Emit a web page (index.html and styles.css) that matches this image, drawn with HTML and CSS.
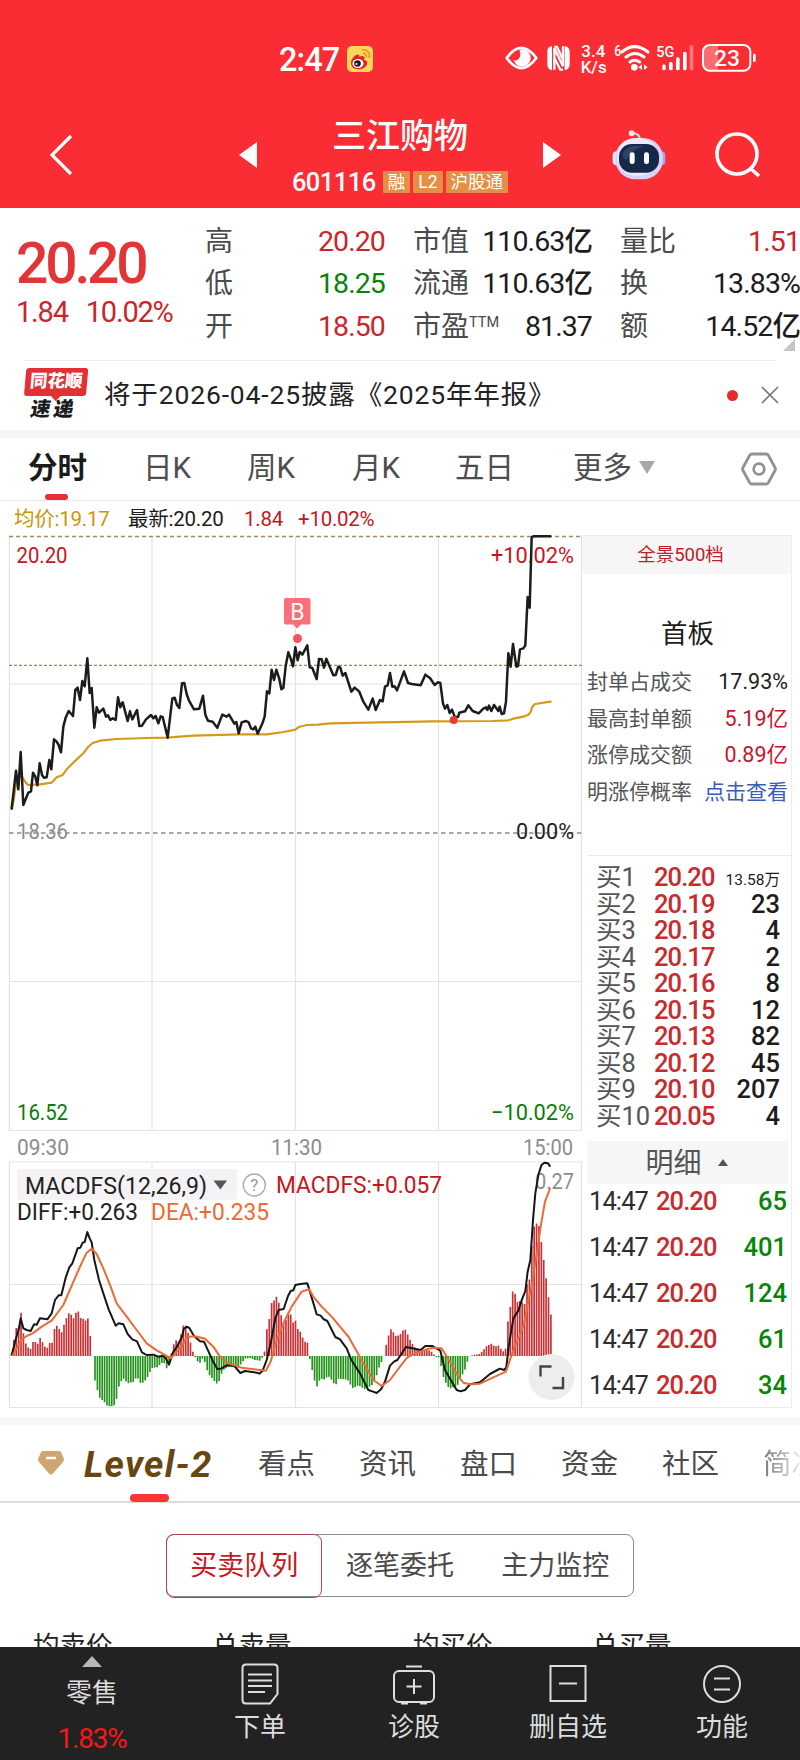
FILE: index.html
```html
<!DOCTYPE html>
<html lang="zh-CN">
<head>
<meta charset="utf-8">
<title>三江购物 601116</title>
<link rel="stylesheet" href="styles.css">
</head>
<body>
<div class="app">
  <header class="header">
    <div class="status">
      <span class="clock">2:47</span>
      <svg class="weibo" viewBox="0 0 26 26"><rect width="26" height="26" rx="5" fill="#fbd75b"/><path d="M4 17c0-5 6-10 8-8 1 1 0 2 0 2s4-2 5 0c1 1 0 2 0 3 2 0 4 2 3 4-1 4-6 6-10 5-4 0-6-3-6-6z" fill="#e0262b"/><ellipse cx="11" cy="17.500" rx="5.500" ry="4.500" fill="#fff"/><circle cx="10.500" cy="17.500" r="3.300" fill="#1b1b1b"/><circle cx="9.500" cy="18" r="1" fill="#fff"/><path d="M15 4c5-1 9 3 7 8M16 7.500c2-.5 4 1.500 3 4" fill="none" stroke="#f0901e" stroke-width="1.600"/></svg>
      <svg class="status-icons" viewBox="0 0 810 120">
        <path d="M20 57Q64-4 109 57Q64 118 20 57z" fill="none" stroke="#fff" stroke-width="8" stroke-linejoin="round"/>
        <path d="M58 32a26 26 0 1 1-17 31c12 6 26-8 17-31z" fill="#fff"/>
        <path d="M154 24c-8 2-10 6-10 14v38c0 9 3 13 10 15zM196 24c8 2 11 6 11 14v38c0 9-3 13-11 15z" fill="#fff" stroke="#fff" stroke-width="4"/>
        <path d="M163 92V28l26 54V22M163 24h8l18 38M163 56l18 36h8" fill="none" stroke="#fff" stroke-width="7"/>
        <g fill="#fff" class="status-text">
          <text x="244" y="53" font-size="49" textLength="72" lengthAdjust="spacingAndGlyphs">3.4</text>
          <text x="242" y="101" font-size="52" textLength="78" lengthAdjust="spacingAndGlyphs">K/s</text>
          <text x="343" y="52" font-size="46" textLength="21" lengthAdjust="spacingAndGlyphs">6</text>
          <text x="469" y="55" font-size="46" textLength="54" lengthAdjust="spacingAndGlyphs">5G</text>
          <text x="642" y="80" font-size="68" textLength="78" lengthAdjust="spacingAndGlyphs">23</text>
        </g>
        <g fill="none" stroke="#fff" stroke-width="9" stroke-linecap="round"><path d="M366 39q37-32 78 0M378 54q27-21 54 0M390 69q14-11 29 0"/></g>
        <circle cx="403" cy="85" r="10" fill="#fff"/><path d="M426 76v17l-11-8zM432 76v17l11-8z" fill="#fff"/>
        <g fill="#fff"><rect x="487" y="76" width="10" height="18" rx="5"/><rect x="507" y="69" width="11" height="25" rx="5"/><rect x="528" y="55" width="11" height="39" rx="5"/><rect x="549" y="38" width="11" height="56" rx="5"/><rect x="569" y="18" width="11" height="76" rx="5" opacity=".35"/></g>
        <path d="M632 19h22v75h-22q-22 0-22-22V41q0-22 22-22z" fill="#fff" opacity=".3"/>
        <rect x="609" y="18" width="142" height="77" rx="20" fill="none" stroke="#fff" stroke-width="6"/><rect x="759" y="44" width="8" height="25" rx="4" fill="#fff"/>
      </svg>
    </div>
    <nav class="nav">
      <svg class="back" viewBox="0 0 24 42"><path d="M22 2L3 21l19 19" fill="none" stroke="#fff" stroke-width="3.200"/></svg>
      <svg class="arrow" viewBox="0 0 18 26"><path d="M18 0v26L0 13z" fill="#fff"/></svg>
      <div class="stock">
        <h1 class="name">三江购物</h1>
        <div class="code-row"><span class="code">601116</span><span class="tag">融</span><span class="tag">L2</span><span class="tag">沪股通</span></div>
      </div>
      <svg class="arrow" viewBox="0 0 18 26"><path d="M0 0v26l18-13z" fill="#fff"/></svg>
      <svg class="robot" viewBox="0 0 162 150">
        <path d="M62 10q20 0 22 18" fill="none" stroke="#f5d9ef" stroke-width="6"/><circle cx="59" cy="10" r="9" fill="#ffe2e6"/>
        <rect x="2" y="64" width="24" height="42" rx="12" fill="#e9e4ff"/><rect x="136" y="64" width="24" height="42" rx="12" fill="#a9a2ee"/>
        <rect x="10" y="24" width="143" height="124" rx="60" fill="#d6d2fb"/><rect x="16" y="25" width="122" height="112" rx="54" fill="#eeeaff"/>
        <rect x="21" y="42" width="120" height="86" rx="38" fill="#16284a"/><path d="M32 70q10-22 36-22h30q-38 8-52 40-16 4-14-18z" fill="#3a4c72" opacity=".7"/>
        <rect x="53" y="67" width="15" height="35" rx="7" fill="#fff"/><rect x="96" y="67" width="15" height="35" rx="7" fill="#fff"/>
      </svg>
      <svg class="search" viewBox="0 0 46 46"><circle cx="22" cy="22" r="20" fill="none" stroke="#fff" stroke-width="3.600"/><path d="M35 36l9 8" stroke="#fff" stroke-width="3.600"/></svg>
    </nav>
  </header>

  <section class="quote">
    <div class="price-block"><div class="price">20.20</div><div class="change"><span>1.84</span><span>10.02%</span></div></div>
    <dl class="stats">
      <dt>高</dt><dd class="red">20.20</dd><dt>市值</dt><dd>110.63亿</dd><dt>量比</dt><dd class="red">1.51</dd>
      <dt>低</dt><dd class="green">18.25</dd><dt>流通</dt><dd>110.63亿</dd><dt>换</dt><dd>13.83%</dd>
      <dt>开</dt><dd class="red">18.50</dd><dt>市盈<sup>TTM</sup></dt><dd>81.37</dd><dt>额</dt><dd>14.52亿</dd>
    </dl>
    <i class="corner"></i>
  </section>

  <section class="notice">
    <div class="logo"><span class="logo-top">同花顺</span><span class="logo-bottom">速递</span></div>
    <p class="notice-text">将于2026-04-25披露《2025年年报》</p>
    <i class="dot"></i>
    <svg class="close" viewBox="0 0 18 18"><path d="M1 1l16 16M17 1L1 17" stroke="#777" stroke-width="1.700"/></svg>
  </section>

  <nav class="periods">
    <span class="period active">分时</span><span class="period">日K</span><span class="period">周K</span><span class="period">月K</span><span class="period">五日</span><span class="period">更多<i class="more"></i></span>
    <svg class="gear" viewBox="0 0 36 34"><path d="M11 2h14q1.500 0 2.300 1.300L34 15.500q.8 1.500 0 3L27.300 30.700Q26.500 32 25 32H11q-1.500 0-2.300-1.300L2 18.500q-.8-1.500 0-3L8.700 3.300Q9.500 2 11 2z" fill="none" stroke="#929292" stroke-width="2.800"/><circle cx="18" cy="17" r="5.300" fill="none" stroke="#929292" stroke-width="2.800"/></svg>
  </nav>

  <main class="board">
    <div class="charts">
      <div class="legend"><span class="gold">均价:19.17</span><span>最新:20.20</span><span class="deep">1.84</span><span class="deep">+10.02%</span></div>
      <svg class="chart" viewBox="0 535 585 874">
        <g fill="none" stroke="#e3e3e3" stroke-width="1.200">
          <path d="M9.500 536V1130.500H581.500V536M152 536V1130M295.500 536V1130M438.500 536V1130M9 684H582M9 981.500H582"/>
          <path d="M9.500 1162H581.500V1407.500H9.500zM152 1162V1407M295.500 1162V1407M438.500 1162V1407M9 1284.500H582"/>
        </g>
        <rect x="17" y="1169" width="220" height="31" rx="3" fill="#f5f2f5"/>
        <g fill="none" stroke-width="1.300"><path d="M9 536.500H582" stroke="#a08a55" stroke-dasharray="4 3"/><path d="M9 665.300H582" stroke="#a4874b" stroke-dasharray="3 2"/><path d="M9 833H582" stroke="#8c8c8c" stroke-dasharray="4.500 3.500"/></g>
        <g class="axis" font-size="22.500">
          <text x="16.500" y="563" fill="#c4161c" textLength="51" lengthAdjust="spacingAndGlyphs">20.20</text>
          <text x="491" y="563" fill="#c4161c" textLength="83" lengthAdjust="spacingAndGlyphs">+10.02%</text>
          <text x="17" y="838.500" fill="#8c8c8c" textLength="51" lengthAdjust="spacingAndGlyphs">18.36</text>
          <text x="516" y="838.500" fill="#222" textLength="58" lengthAdjust="spacingAndGlyphs">0.00%</text>
          <text x="17" y="1120" fill="#087c08" textLength="51" lengthAdjust="spacingAndGlyphs">16.52</text>
          <text x="491" y="1120" fill="#087c08" textLength="83" lengthAdjust="spacingAndGlyphs">−10.02%</text>
          <g fill="#8c8c8c">
            <text x="17" y="1155" textLength="52" lengthAdjust="spacingAndGlyphs">09:30</text>
            <text x="271" y="1155" textLength="51" lengthAdjust="spacingAndGlyphs">11:30</text>
            <text x="523" y="1155" textLength="50" lengthAdjust="spacingAndGlyphs">15:00</text>
            <text x="535" y="1189" textLength="39" lengthAdjust="spacingAndGlyphs">0.27</text>
          </g>
          <g font-size="23">
            <text x="25" y="1194" fill="#222" textLength="182" lengthAdjust="spacingAndGlyphs">MACDFS(12,26,9)</text>
            <text x="276" y="1193" fill="#c4161c" textLength="166" lengthAdjust="spacingAndGlyphs">MACDFS:+0.057</text>
            <text x="17" y="1219.500" fill="#222" textLength="121" lengthAdjust="spacingAndGlyphs">DIFF:+0.263</text>
            <text x="151" y="1219.500" fill="#ec6a32" textLength="118" lengthAdjust="spacingAndGlyphs">DEA:+0.235</text>
          </g>
        </g>
        <path d="M213.500 1180.500h13.500l-6.700 9z" fill="#555"/>
        <circle cx="254.300" cy="1185" r="11" fill="none" stroke="#aaa" stroke-width="1.300"/><text x="254.300" y="1191" text-anchor="middle" font-size="17" fill="#999">?</text>

        <g transform="translate(0 520) scale(.33333)" fill="none" stroke-linejoin="round" stroke-linecap="round">
          <path stroke="#d69a18" stroke-width="6.500" d="M36 866L42 835L48 790L56 772L66 770L76 786L84 795L120 793L155 788L170 772L188 765L200 748L220 728L236 713L250 700L264 681L278 669L300 662L350 657L440 654L500 653L580 647L720 643L800 643L850 636L886 629L897 621L920 615L955 614L990 610L1100 608L1300 604L1478 603L1525 601L1540 596L1570 590L1585 584L1592 576L1597 560L1605 552L1652 545"/>
          <path stroke="#1c1c1c" stroke-width="7.500" d="M35 866L48 752L55 808L62 696L70 855L78 835L85 818L93 814L99 758L106 770L112 796L119 730L126 765L132 773L140 772L148 720L154 748L162 658L170 665L176 675L183 697L190 620L197 593L206 573L219 588L226 510L233 503L240 540L247 483L254 499L262 415L269 519L275 504L283 623L290 562L297 578L310 566L318 590L324 586L331 600L338 595L347 600L354 532L361 562L368 547L383 603L390 574L397 598L411 570L418 618L426 617L438 598L453 585L460 595L467 588L475 610L482 589L488 591L503 653L517 535L524 533L531 555L538 564L546 490L553 489L560 522L567 542L582 568L598 566L609 527L616 584L624 602L638 605L652 623L667 584L680 590L687 584L703 611L709 606L716 640L725 607L738 603L746 607L753 625L760 628L766 620L773 641L788 608L794 590L801 514L808 520L815 449L822 480L829 449L838 477L844 508L850 504L857 439L865 397L872 415L879 439L886 382L893 421L899 396L907 404L922 376L929 442L937 444L950 477L957 417L965 418L972 443L979 416L1000 466L1007 465L1015 440L1021 443L1028 467L1036 459L1054 515L1064 503L1078 515L1090 545L1105 569L1118 536L1127 570L1140 540L1148 544L1155 500L1163 496L1170 459L1177 500L1184 499L1191 511L1200 487L1212 454L1224 489L1235 492L1262 496L1276 464L1290 474L1304 495L1313 487L1321 489L1329 550L1335 566L1342 555L1349 579L1356 569L1364 590L1374 591L1378 578L1395 574L1405 556L1418 573L1436 580L1450 566L1458 562L1462 570L1467 557L1474 573L1482 555L1495 573L1499 560L1505 582L1512 580L1518 545L1525 400L1532 440L1539 372L1549 440L1554 438L1560 388L1570 385L1576 376L1583 231L1589 263L1595 52L1600 49L1651 49"/>
          <circle cx="1361" cy="600" r="12" fill="#e83b36"/>
        </g>
        <path d="M286 598h22.500q2 0 2 2v22.500q0 2-2 2H301l-4 4-4-4h-7q-2 0-2-2V600q0-2 2-2z" fill="#fb6f78"/><text x="297.300" y="619.500" text-anchor="middle" font-size="23" fill="#fff">B</text><circle cx="297.500" cy="638.500" r="4.500" fill="#f0545e"/>

        <g transform="translate(0 1100) scale(.33333)" fill="none" stroke-linejoin="round">
          <path id="bars-up" stroke="#c92f33" stroke-width="5"/>
          <path id="bars-down" stroke="#24911a" stroke-width="5"/>
          <path stroke="#161616" stroke-width="6" d="M35 765L48 715L56 688L62 655L70 685L80 690L92 693L102 673L110 674L120 655L142 658L155 640L165 600L176 586L184 586L197 533L208 502L217 490L233 445L241 443L248 428L254 426L262 396L269 415L275 427L283 480L297 540L310 580L326 628L347 677L356 670L370 673L383 702L397 718L411 724L426 757L440 765L460 764L475 770L488 767L497 774L507 794L519 757L531 740L546 710L551 687L560 680L568 684L582 708L600 724L612 725L638 782L652 807L663 806L680 796L703 798L721 819L735 813L770 818L778 821L788 812L800 780L812 730L826 655L836 630L851 627L864 588L872 573L880 571L886 555L901 552L922 550L929 572L950 643L962 647L970 657L982 663L1006 711L1020 718L1040 745L1054 780L1080 820L1105 870L1117 874L1130 879L1143 868L1155 845L1170 797L1182 785L1192 780L1200 768L1218 741L1230 743L1262 750L1276 738L1298 738L1312 747L1321 752L1335 810L1350 836L1370 870L1382 874L1395 870L1410 853L1440 847L1470 822L1492 810L1500 806L1512 810L1519 802L1526 740L1540 655L1555 632L1566 598L1576 573L1583 515L1591 480L1599 360L1606 280L1615 225L1624 196L1633 188L1644 190L1651 200"/>
          <path stroke="#ec6a36" stroke-width="6" d="M37 767L50 745L65 718L80 708L98 700L125 680L155 662L190 615L219 548L240 500L260 458L275 446L290 462L310 505L332 560L350 610L380 650L410 690L440 730L470 751L495 765L512 775L530 755L548 735L560 711L585 709L615 716L640 740L660 770L685 790L725 803L780 810L798 812L812 785L830 720L855 660L875 620L895 590L905 575L928 568L940 590L965 620L995 650L1046 711L1080 772L1120 840L1145 858L1170 840L1200 800L1222 772L1245 760L1280 748L1300 743L1325 745L1350 785L1375 830L1390 848L1410 853L1440 851L1480 832L1518 815L1540 750L1570 680L1582 620L1598 540L1612 450L1622 380L1635 305L1651 264"/>
        </g>
        <circle cx="551.500" cy="1377" r="23" fill="#ededed"/><path d="M540.500 1376.500v-10h11M552.500 1388h10.500v-11" fill="none" stroke="#444" stroke-width="2.400"/>
      </svg>
    </div>

    <aside class="side">
      <div class="depth-head">全景500档</div>
      <div class="limit">
        <h2>首板</h2>
        <p><span>封单占成交</span><b>17.93%</b></p>
        <p><span>最高封单额</span><b class="crimson">5.19亿</b></p>
        <p><span>涨停成交额</span><b class="crimson">0.89亿</b></p>
        <p><span>明涨停概率</span><b class="blue">点击查看</b></p>
      </div>
      <div class="book">
        <div><span>买1</span><b>20.20</b><em class="small">13.58万</em></div>
        <div><span>买2</span><b>20.19</b><em>23</em></div>
        <div><span>买3</span><b>20.18</b><em>4</em></div>
        <div><span>买4</span><b>20.17</b><em>2</em></div>
        <div><span>买5</span><b>20.16</b><em>8</em></div>
        <div><span>买6</span><b>20.15</b><em>12</em></div>
        <div><span>买7</span><b>20.13</b><em>82</em></div>
        <div><span>买8</span><b>20.12</b><em>45</em></div>
        <div><span>买9</span><b>20.10</b><em>207</em></div>
        <div><span>买10</span><b>20.05</b><em>4</em></div>
      </div>
      <div class="ticks-head">明细<i></i></div>
      <div class="ticks">
        <div><span>14:47</span><b>20.20</b><em>65</em></div>
        <div><span>14:47</span><b>20.20</b><em>401</em></div>
        <div><span>14:47</span><b>20.20</b><em>124</em></div>
        <div><span>14:47</span><b>20.20</b><em>61</em></div>
        <div><span>14:47</span><b>20.20</b><em>34</em></div>
      </div>
    </aside>
  </main>

  <nav class="topics">
    <svg class="gem" viewBox="0 0 26 24"><path d="M5 0h16q1 0 2 1l3 7q0 2-1 3L14.500 23q-1.500 1.500-3 0L1 11Q0 10 0 8l3-7q1-1 2-1z" fill="#cfa671"/><path d="M8 7h10" stroke="#fff" stroke-width="2.500"/></svg>
    <span class="level">Level-2</span><span>看点</span><span>资讯</span><span>盘口</span><span>资金</span><span>社区</span><span class="fade">简况</span>
  </nav>

  <section class="level-panel">
    <div class="segments"><span class="selected">买卖队列</span><span>逐笔委托</span><span>主力监控</span></div>
    <div class="averages"><span>均卖价</span><span>总卖量</span><span>均买价</span><span>总买量</span></div>
  </section>

  <footer class="toolbar">
    <div class="sector"><i></i><span>零售</span><b>1.83%</b></div>
    <div class="tool"><svg viewBox="0 0 44 42"><path d="M8 1.500h28q3.500 0 3.500 3.500v26l-7.500 9.500H8q-3.500 0-3.500-3.500V5q0-3.500 3.500-3.500z"/><path d="M10 11.500h24M10 17.500h24M10 23h24M10 29h17"/></svg><span>下单</span></div>
    <div class="tool"><svg viewBox="0 0 44 42"><rect x="2" y="8" width="40" height="31" rx="5"/><path d="M14 3.500h16M22 16v15M14.500 23.500h15M9 40.500h7M28 40.500h7"/></svg><span>诊股</span></div>
    <div class="tool"><svg viewBox="0 0 44 42"><rect x="4.500" y="3" width="35" height="35"/><path d="M13 20.500h18"/></svg><span>删自选</span></div>
    <div class="tool"><svg viewBox="0 0 44 42"><circle cx="22" cy="21" r="18"/><path d="M14 15.500h16M14 26.500h16"/></svg><span>功能</span></div>
  </footer>
</div>
<script src="chart.js"></script>
</body>
</html>
```
FILE: styles.css
```css
* { box-sizing: border-box; margin: 0; padding: 0; }
body { font-family: Roboto, "Noto Sans CJK SC", sans-serif; background: #fff; color: #1c1c1c; }
b, em, i { font-style: normal; font-weight: 500; }
svg { display: block; flex: none; overflow: visible; }
.app { width: 800px; height: 1760px; overflow: hidden; display: flex; flex-direction: column; }
.app > * { flex: none; }
.red { color: #c9262b; }
.green { color: #078507; }

.header { height: 208px; background: #fa2d34; color: #fff; }
.status { height: 102px; padding: 16px 0 0 279px; display: flex; align-items: center; }
.clock { font-size: 32.500px; font-weight: 500; line-height: 42px; width: 68px; padding-top: 2px; letter-spacing: -.9px; }
.weibo { width: 26px; height: 26px; }
.status-icons { width: 270px; height: 40px; margin-left: 127px; }
.status-text { font-weight: 500; }
.nav { height: 106px; display: flex; align-items: center; }
.back { width: 24px; height: 42px; margin: 0 166px 0 49px; }
.arrow { width: 18px; height: 26px; }
.stock { width: 286px; padding-top: 8px; }
.name { height: 46px; line-height: 42px; font-size: 34px; font-weight: 500; font-family: "Noto Sans CJK SC", sans-serif; text-align: center; }
.code-row { height: 46px; display: flex; align-items: center; justify-content: center; gap: 3px; }
.code { font-size: 25.5px; font-weight: 500; letter-spacing: -.5px; margin-right: 4px; }
.tag { height: 22px; line-height: 22px; padding: 0 5px; background: #e48f44; font-size: 17.5px; border-radius: 1px; }
.robot { width: 54px; height: 50px; margin: 0 49px 0 51px; }
.search { width: 46px; height: 46px; }

.quote { height: 153px; display: grid; grid-template-columns: 205px 595px; position: relative; padding-top: 13px; }
.price-block { padding-left: 16px; }
.price { margin-top: 12px; height: 60px; line-height: 62px; font-size: 57px; font-weight: 500; letter-spacing: -3.200px; color: #e33437; }
.change { display: flex; gap: 18px; font-size: 29px; letter-spacing: -1.200px; line-height: 38px; color: #c9262b; }
.stats { display: grid; grid-template-columns: 60px 120px 88px 119px 88px 120px; grid-auto-rows: 42.300px; }
.stats dt { font-size: 28px; line-height: 42px; color: #4b4b4b; white-space: nowrap; }
.stats dt:nth-of-type(3n+2), .stats dt:nth-of-type(3n) { padding-left: 28px; }
.stats dd { font-size: 28.500px; line-height: 42px; letter-spacing: -.9px; font-weight: 450; white-space: nowrap; justify-self: end; }
.stats sup { font-size: 14.500px; line-height: 10px; vertical-align: 9px; }
.corner { position: absolute; right: 5px; bottom: 10px; border: 6.500px solid; border-color: transparent #c5c5c5 #c5c5c5 transparent; }

.notice { height: 78px; margin: -1px 0 0; padding: 0 21px 0 23px; display: flex; align-items: center; border-bottom: 8px solid #f6f6f6; background: linear-gradient(#eceef0, #eceef0) 24px 0 / 752px 1px no-repeat; }
.logo { width: 64px; display: flex; flex-direction: column; align-items: center; transform: skewX(-5deg); }
.logo-top { width: 62px; height: 28px; line-height: 27px; background: #e23035; color: #fff; border-radius: 3px; font-size: 17.500px; font-weight: 900; text-align: center; position: relative; }
.logo-top::after { content: ""; position: absolute; left: 27px; top: 28px; border: 5px solid transparent; border-top-color: #e23035; border-bottom: 0; }
.logo-bottom { font-size: 20px; line-height: 26px; font-weight: 900; letter-spacing: 3px; transform: skewX(-5deg); }
.notice-text { flex: 1; margin-left: 17px; font-size: 26.500px; line-height: 40px; color: #222; letter-spacing: .85px; white-space: nowrap; }
.dot { width: 11px; height: 11px; border-radius: 50%; background: #e52c2c; margin-right: 23px; }
.close { width: 18px; height: 18px; }

.periods { height: 63px; display: flex; align-items: center; padding: 0 22px 0 28px; border-bottom: 1px solid #e9e9e9; color: #4d4d4d; font-size: 29.500px; }
.period { line-height: 61px; height: 62px; white-space: nowrap; position: relative; width: 103px; }
.period:nth-child(1) { width: 115px; }
.period:nth-child(2) { width: 104px; }
.period:nth-child(3) { width: 105px; }
.period:nth-child(5) { width: 118px; }
.period:nth-child(6) { width: 168px; }
.active { font-weight: 700; color: #1b1b1b; }
.active::after { content: ""; position: absolute; left: 17px; bottom: 0; width: 23px; height: 6px; border-radius: 3px; background: #e52f32; }
.more { display: inline-block; border: 8.500px solid transparent; border-top: 13px solid #a8a8a8; border-bottom: 0; margin-left: 7px; vertical-align: 4px; }
.gear { width: 36px; height: 34px; }

.board { height: 924px; display: flex; border-bottom: 8px solid #f7f7f7; }
.charts { width: 586px; }
.legend { height: 34px; display: flex; padding: 1px 0 0 14px; font-size: 20.500px; line-height: 34px; }
.legend span { white-space: nowrap; letter-spacing: -.25px; }
.legend span:nth-child(1) { width: 114px; }
.legend span:nth-child(2) { width: 116px; }
.legend span:nth-child(3) { width: 54px; }
.gold { color: #c9950f; }
.deep { color: #c4161c; }
.chart { width: 585px; height: 874px; }

.side { width: 210px; height: 873px; margin: 34px 0 0 -4px; padding-left: 5px; border: 1px solid #ededed; border-left: 0; }
.depth-head { height: 38px; line-height: 38px; text-align: center; margin-left: -5px; padding-right: 12px; background: #f6f6f6; color: #bd2027; font-size: 18.500px; }
.limit { height: 282px; padding: 39px 3px 0 0; border-bottom: 1px solid #ebebeb; }
.limit h2 { font-size: 26.500px; font-weight: 400; text-align: center; height: 44px; line-height: 42px; margin-bottom: 7px; }
.limit p { display: flex; justify-content: space-between; height: 36.600px; line-height: 36.600px; font-size: 21px; color: #555; white-space: nowrap; }
.limit b { font-size: 21.500px; font-weight: 400; color: #222; }
.limit .crimson { color: #c9142f; }
.limit .blue { color: #3a5cb8; font-size: 21px; }
.book { padding: 8px 11px 0 9px; height: 286px; }
.book div { height: 26.520px; line-height: 26px; display: grid; grid-template-columns: 58px 60px 1fr; white-space: nowrap; }
.book span { font-size: 25.500px; color: #555; }
.book b { color: #c92a2d; font-size: 25.500px; letter-spacing: -.9px; }
.book em { text-align: right; font-size: 25.500px; }
.book .small { font-size: 15.500px; line-height: 32px; font-weight: 400; }
.ticks-head { height: 43px; line-height: 45px; margin: -1px 3px 0 0; background: #f6f6f6; text-align: center; font-size: 28px; color: #555; padding-right: 2px; }
.ticks-head i { display: inline-block; border: 5.500px solid transparent; border-bottom: 7.500px solid #555; border-top: 0; margin-left: 16px; vertical-align: 7px; }
.ticks { padding: 0 4px 0 2px; margin-top: -5px; }
.ticks div { display: grid; grid-template-columns: 67px 62px 1fr; height: 45.900px; line-height: 45.900px; font-size: 25.500px; letter-spacing: -.9px; }
.ticks span { color: #2e2e2e; }
.ticks b { color: #c92a2d; }
.ticks em { text-align: right; color: #078507; letter-spacing: 0; }

.topics { height: 78px; padding-left: 38px; display: flex; align-items: center; border-bottom: 2px solid #dcdcdc; font-size: 28.500px; color: #4a4a4a; white-space: nowrap; }
.topics span { width: 101px; line-height: 79px; height: 76px; flex: none; }
.gem { width: 26px; height: 24px; margin-right: 20px; }
.topics .level { width: 174px; font: italic 700 37px/79px Roboto, sans-serif; color: #694510; letter-spacing: 1.200px; position: relative; }
.level::after { content: ""; position: absolute; left: 46px; bottom: -1px; width: 39px; height: 8px; border-radius: 4px; background: #fb3535; }
.topics .fade { width: 38px; overflow: hidden; background: linear-gradient(90deg, #777, #eee); background-clip: text; -webkit-background-clip: text; color: transparent; }

.level-panel { height: 144px; padding-top: 31px; overflow: hidden; }
.segments { width: 468px; height: 63px; margin: 0 auto; display: grid; grid-template-columns: repeat(3, 1fr); border: 1px solid #8b8b8b; border-radius: 8px; text-align: center; line-height: 62px; font-size: 27px; color: #4a4a4a; }
.segments .selected { color: #c9161c; border: 1px solid #b0454f; border-radius: 8px; margin: -1px 0 -1px -1px; }
.averages { margin-top: 31px; padding-left: 33px; display: flex; font-size: 26.500px; line-height: 36px; color: #222; }
.averages span:nth-child(odd) { width: 179px; }
.averages span:nth-child(even) { width: 201px; }

.toolbar { height: 113px; background: #222; color: #ddd; display: flex; padding-left: 14px; }
.toolbar > div { display: flex; flex-direction: column; align-items: center; font-size: 26px; }
.sector { width: 156px; }
.sector i { border: 10px solid transparent; border-bottom: 11px solid #b8b8b8; border-top: 0; margin-top: 9px; }
.sector span { line-height: 36px; margin-top: 8px; }
.sector b { line-height: 34px; margin-top: 11px; color: #f3191b; font-size: 28px; font-weight: 400; letter-spacing: -1.200px; }
.tool { width: 154px; padding-top: 16px; }
.tool:nth-child(2) { margin-left: 13px; }
.tool svg { width: 44px; height: 42px; fill: none; stroke: #dedede; stroke-width: 2; }
.tool span { line-height: 40px; margin-top: 2px; }
```
FILE: chart.js
```js
// Histogram envelope: x position and signed height, interpolated to one bar per minute.
const envelope = [34,4,41,45,48,85,55,75,62,140,69,75,76,40,83,27,91,18,98,42,105,44,112,33,119,56,126,45,133,30,140,20,148,40,155,32,162,78,169,92,176,86,183,65,190,88,197,108,205,128,212,128,219,110,226,125,233,142,240,112,247,118,254,98,262,126,269,68,276,36,281,-58,289,-88,296,-120,303,-131,311,-133,318,-147,325,-150,332,-152,340,-149,347,-145,354,-98,361,-82,368,-67,375,-69,382,-85,390,-78,397,-82,404,-72,411,-60,418,-78,425,-83,432,-78,440,-68,447,-55,454,-38,461,-33,468,-36,475,-32,482,-22,490,-20,497,-25,503,-50,510,-10,517,20,524,45,531,48,538,40,546,80,553,100,560,85,567,60,574,30,581,4,587,-6,595,-20,602,-20,609,-5,616,-22,623,-48,630,-60,638,-68,645,-78,652,-84,659,-72,666,-48,673,-40,690,-30,715,-35,735,-8,750,-6,765,-12,780,-14,788,-3,795,18,800,78,807,105,814,158,821,165,829,178,836,162,843,125,850,95,857,105,865,130,872,125,879,100,886,108,893,82,903,70,910,50,917,40,924,40,928,-2,935,-35,942,-65,949,-97,957,-75,964,-68,971,-72,985,-60,995,-72,1006,-90,1015,-68,1035,-70,1048,-75,1055,-98,1075,-88,1095,-100,1115,-88,1130,-58,1140,-25,1150,-8,1156,25,1163,48,1170,82,1177,78,1185,60,1199,62,1213,83,1220,72,1227,55,1235,40,1242,28,1250,20,1265,15,1280,20,1290,15,1300,8,1306,-3,1318,-4,1325,-38,1332,-70,1340,-85,1348,-98,1364,-92,1372,-90,1380,-70,1390,-50,1398,-35,1405,-5,1412,2,1440,6,1450,18,1460,30,1475,37,1485,28,1495,32,1505,18,1512,12,1518,25,1525,120,1532,152,1539,200,1546,185,1553,160,1560,165,1575,155,1582,225,1589,230,1596,340,1603,392,1610,398,1617,390,1625,335,1632,282,1639,228,1646,172,1653,122];
const zero = 768;
let up = "", down = "", k = 0;
for (let i = 0; i < 227; i++) {
  const x = Math.min(34.5 + i * 7.16, 1653);
  while (k < envelope.length - 4 && envelope[k + 2] < x) k += 2;
  const t = (x - envelope[k]) / (envelope[k + 2] - envelope[k]);
  const h = envelope[k + 1] + t * (envelope[k + 3] - envelope[k + 1]);
  const bar = `M${x.toFixed(1)} ${zero}V${(zero - h).toFixed(1)}`;
  if (h > 0) up += bar; else down += bar;
}
document.getElementById("bars-up").setAttribute("d", up);
document.getElementById("bars-down").setAttribute("d", down);
```
